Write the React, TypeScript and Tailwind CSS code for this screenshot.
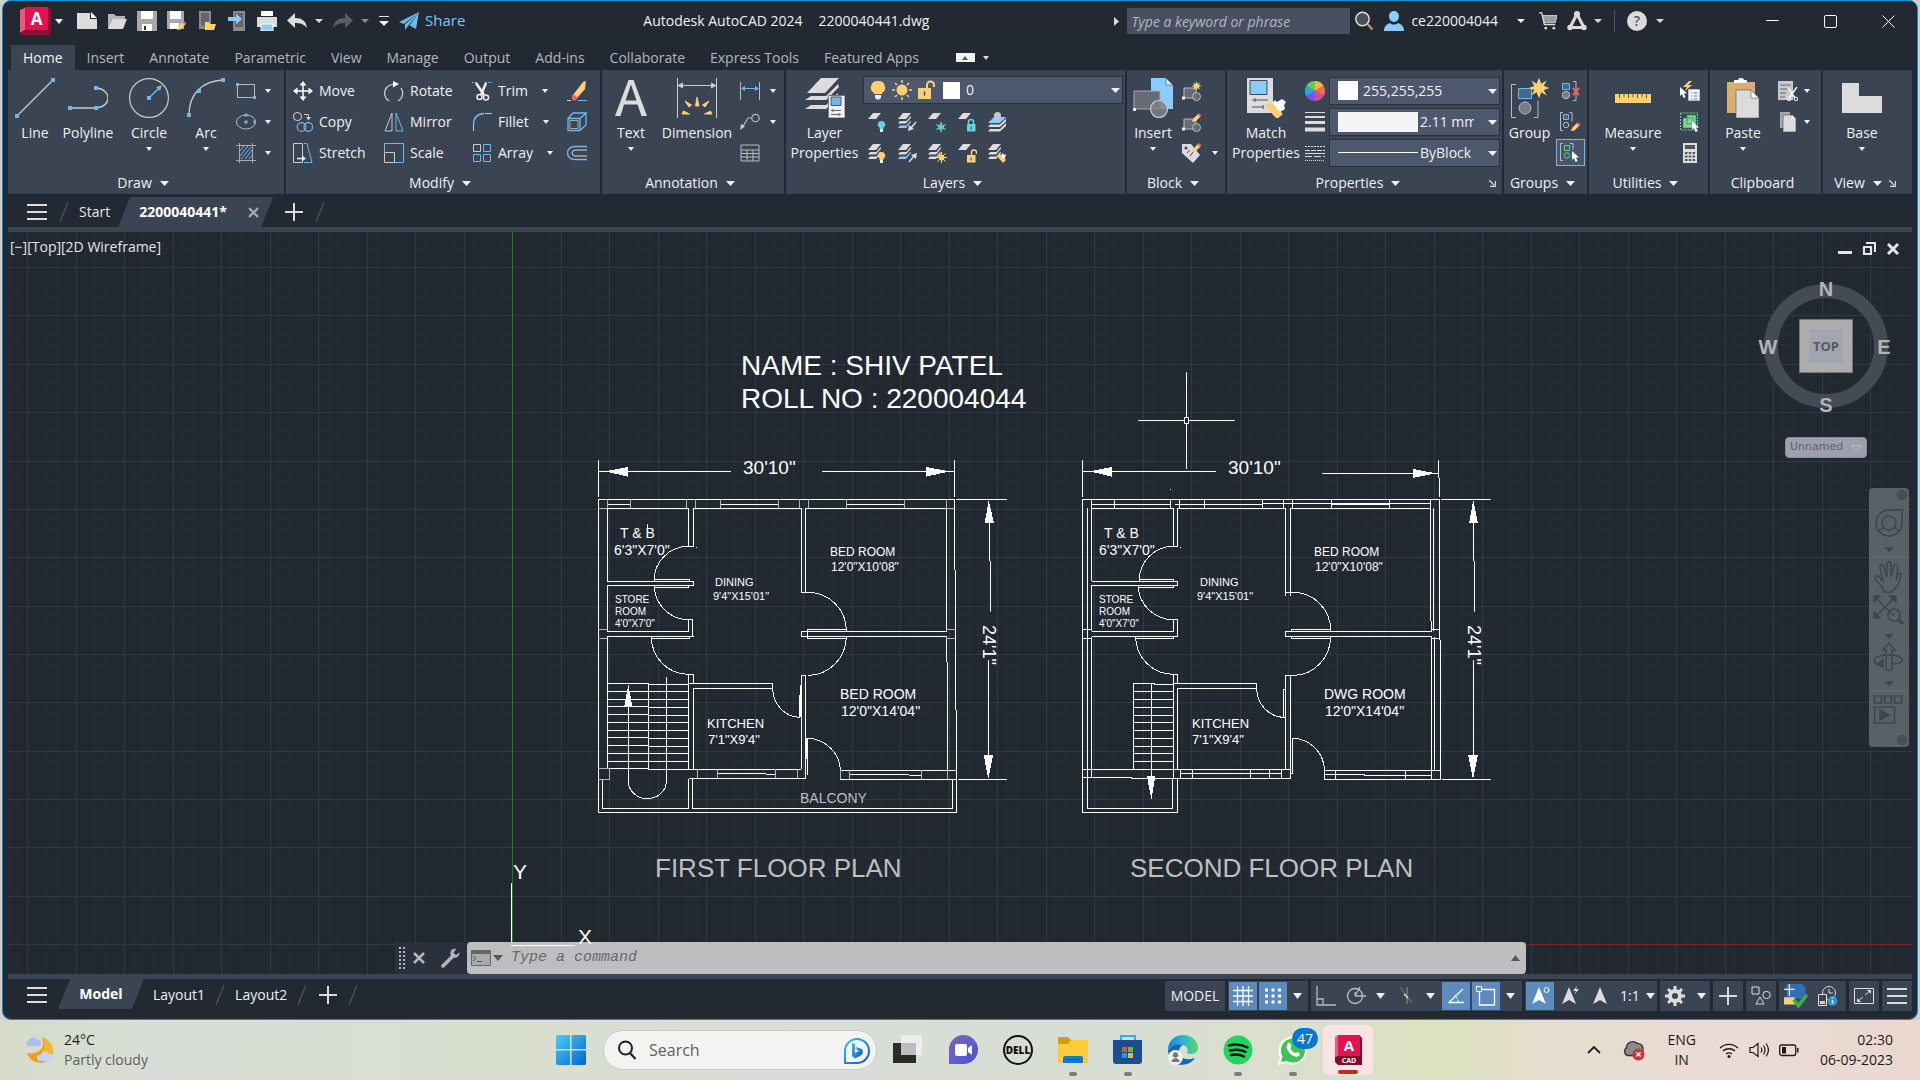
import React from "react";

const W = "#dcdcdc";
const B = "#6fb8ee";
const S = "#8accff";
const Y = "#ffcf74";

type Kids = { children?: React.ReactNode };

function Ico({ children, className = "h-5 w-5", box = 20 }: Kids & { className?: string; box?: number }) {
  return (
    <svg viewBox={`0 0 ${box} ${box}`} className={`shrink-0 ${className}`} fill="none" aria-hidden="true">
      {children}
    </svg>
  );
}

function Tri({ className = "h-1 w-2 text-[#dcdcdc]" }: { className?: string }) {
  return (
    <svg viewBox="0 0 8 5" preserveAspectRatio="none" className={`shrink-0 ${className}`} aria-hidden="true">
      <path d="M0 0h8L4 5z" fill="currentColor" />
    </svg>
  );
}

/* ---------- icons ---------- */

const Dot = ({ x, y, s = 4 }: { x: number; y: number; s?: number }) => (
  <rect x={x - s / 2} y={y - s / 2} width={s} height={s} fill={B} />
);

const Cursor = ({ x, y }: { x: number; y: number }) => (
  <path transform={`translate(${x} ${y})`} d="M0 0v9l2-2 1.600 4 2-1-1.700-3.500H7z" fill="#fff" />
);

const Star = ({ x, y, k = 1 }: { x: number; y: number; k?: number }) => (
  <path
    transform={`translate(${x} ${y}) scale(${k})`}
    d="M0-5.500 1.200-2.200 4-4 2.500-1.100 5.500 0 2.500 1.100 4 4 1.200 2.300 0 5.500-1.200 2.300-4 4-2.500 1.100-5.500 0-2.500-1.100-4-4-1.200-2.200z"
    fill={Y}
  />
);

const Pencil = ({ x, y }: { x: number; y: number }) => (
  <g transform={`translate(${x} ${y})`}>
    <path d="M0 8 1 5l5-5 2.500 2.500-5 5z" fill={Y} />
    <path d="M5.500.5 7-1l2.500 2.500L8 3z" fill="#f0625f" />
  </g>
);

const Stack = ({ blue = false, n = 3 }: { blue?: boolean; n?: number }) => (
  <g>
    <path d="M6 1h8l-5 6H1z" fill={W} />
    {n > 1 && <path d="M3 9h6.500l4-5 .5 1.500L9 11.500H1z" fill={W} />}
    {n > 2 && <path d="M3 13.500h6.500l4-5 .5 1.500L9 16H1z" fill={blue ? S : W} />}
  </g>
);

const Lock = ({ c, open = false }: { c: string; open?: boolean }) => (
  <g>
    <path d={open ? "M14.500 12V9.500a2.500 2.500 0 0 1 5 0V11" : "M11.500 12V10a2.500 2.500 0 0 1 5 0v2"} stroke={c} strokeWidth="1.500" />
    <path d="M10 12h8.500v7.500H10z" fill={c} />
    <path d="M14 14.500v3" stroke="#3b4453" />
  </g>
);

const Bulb = ({ c }: { c: string }) => (
  <g>
    <path d="M14.500 9a3.500 3.500 0 0 1 2 6.500v1.500h-4v-1.500A3.500 3.500 0 0 1 14.500 9z" fill={c} />
    <path d="M13 17h3v3h-3z" fill="#eee" />
  </g>
);

const BlockBase = () => (
  <g>
    <path d="M2 7h12v10H2z" fill="#666c77" stroke="#b9bcc2" />
    <circle cx="14.500" cy="15.500" r="4" fill="#666c77" fillOpacity=".8" stroke="#b9bcc2" />
    <path d="M0 15.500h3v3H0z" fill="#eee" />
  </g>
);

const I = {
  newFile: <Ico><path d="M0 2h13v6h7v10H0z" fill={W} /><path d="M14 1l6 6h-6z" fill="#fff" /></Ico>,
  open: <Ico><path d="M1 18V3h6l2 2h9v3H5z" fill="#b5b5b5" /><path d="M5 8h15l-4 10H1z" fill={W} /></Ico>,
  save: <Ico><path d="M0 0h20v20H0z" fill="#a9a9a9" /><path d="M4 0h12v8H4zM5 13h10v7H5z" fill="#fff" /><path d="M7 15h2v4H7z" fill="#333" /></Ico>,
  saveAs: <Ico><path d="M0 0h17v18H0z" fill="#a9a9a9" /><path d="M3 0h11v8H3zM3 12h9v6H3z" fill="#fff" /><Pencil x={10} y={11} /></Ico>,
  mobileOpen: <Ico><path d="M2 0h12v18H2z" fill="#8b8b8b" /><path d="M4 2h8v13H4z" fill="#666" /><path d="M8 19V11h4l1 2h6l-2 6z" fill={Y} /></Ico>,
  mobileSave: <Ico><path d="M6 0h12v20H6z" fill="#8b8b8b" /><path d="M8 2h8v14H8z" fill="#666" /><path d="M1 6h8V2.500L15 8l-6 5.500V10H1z" fill={S} /></Ico>,
  print: <Ico><path d="M4 0h12v5H4z" fill="#fff" /><path d="M0 6h20v10H0z" fill={W} /><path d="M4 13h12v7H4z" fill={S} stroke="#fff" /></Ico>,
  undo: <Ico><path d="M8 2v5c7 0 11 3 12 10-3-4-7-5-12-5v5L0 9.500z" fill={W} /></Ico>,
  redo: <Ico><path d="M12 2v5C5 7 1 10 0 17c3-4 7-5 12-5v5l8-7.500z" fill="#5a5f67" /></Ico>,
  plane: <Ico><path d="M20 1 0 11l5 2zM20 1 6 13.500V19l3-4zM20 1l-3 17-6.500-3.500z" fill={B} /></Ico>,
  line: <Ico box={40} className="h-10 w-10"><path d="M2 38 38 2" stroke="#ccc" strokeWidth="1.300" /><Dot x={2} y={38} /><Dot x={38} y={2} /></Ico>,
  polyline: <Ico box={40} className="h-10 w-10"><path d="M2 30h26M28 10c16 1 16 19 0 20" stroke="#ccc" strokeWidth="1.300" /><Dot x={2} y={30} /><Dot x={28} y={30} /><Dot x={28} y={10} /></Ico>,
  circle: <Ico box={40} className="h-10 w-10"><circle cx="20" cy="20" r="19.400" stroke="#ccc" strokeWidth="1.200" /><path d="m20 20 10-10" stroke={B} strokeWidth="1.500" /><path d="m33 7-2 6-4-4z" fill={B} /><Dot x={20} y={20} /></Ico>,
  arc: <Ico box={40} className="h-10 w-10"><path d="M3 37C3 16 16 3 37 2" stroke="#ccc" strokeWidth="1.300" /><Dot x={3} y={37} /><Dot x={13} y={13} /><Dot x={37} y={2} /></Ico>,
  rect: <Ico><path d="M1.500 3.500h17v13h-17z" stroke="#bbb" /><Dot x={1.500} y={3.500} s={3} /><Dot x={18.500} y={16.500} s={3} /></Ico>,
  ellipse: <Ico><ellipse cx="10" cy="10" rx="9.500" ry="7" stroke="#bbb" /><Dot x={10} y={10} s={3} /><Dot x={10} y={3} s={3} /><Dot x={19} y={10} s={3} /></Ico>,
  hatch: <Ico><path d="M3.500 0v20M16.500 0v20M0 2.500h20M0 17.500h20" stroke="#aaa" /><path d="m4 8 4-5M4 13l8-10M5 16 15 4M9 16l7-9M13 16l3-4" stroke={B} /></Ico>,
  move: <Ico><path d="M10 2v16M2 10h16" stroke="#fff" strokeWidth="1.500" /><path d="m10 0 3.500 4.500h-7zM10 20l3.500-4.500h-7zM0 10l4.500-3.500v7zM20 10l-4.500-3.500v7z" fill="#fff" /></Ico>,
  rotate: <Ico><path d="M5 3.500A9 9 0 1 0 17 6" stroke="#ccc" strokeWidth="1.300" transform="translate(0 1)" /><path d="M5 4.500 10 3" stroke="#ccc" strokeWidth="1.300" /><path d="M9 0l6 3-6 3.500z" fill="#fff" /></Ico>,
  trim: <Ico><path d="M0 1.500h6M13 1.500h7" stroke={B} strokeDasharray="2 1" /><path d="m4 2 8 12M14 2 9 14" stroke="#eee" strokeWidth="2.500" /><circle cx="7.500" cy="16" r="2.500" stroke="#eee" strokeWidth="1.500" /><circle cx="14" cy="16.500" r="2.500" stroke="#eee" strokeWidth="1.500" /></Ico>,
  erase: <Ico><path d="m19 0-1 8-8 9-4-3L16 1z" fill={Y} /><path d="m6 13 5 4-2.500 2.500C5 20 3.500 17 6 13z" fill="#f0625f" /><path d="M0 19.500h4" stroke="#ccc" /><path d="M11 19.500h9" stroke={B} /></Ico>,
  copy: <Ico><circle cx="4.500" cy="4.500" r="4" stroke="#bbb" strokeWidth="1.200" /><circle cx="8.500" cy="15" r="4.300" stroke={B} strokeWidth="1.200" /><circle cx="15.300" cy="15" r="4.300" stroke={B} strokeWidth="1.200" /><path d="M11 2.500h4.500V6" stroke="#ccc" /><path d="M13 5h5l-2.500 3.500z" fill="#ccc" /></Ico>,
  mirror: <Ico><path d="M8 1v18H1z" stroke="#ccc" /><path d="M12 1v18h7z" stroke={B} /></Ico>,
  fillet: <Ico><path d="M1.500 19v-6" stroke="#ccc" /><path d="M1.500 13C1.500 6 5 2 12 1.500" stroke={B} strokeWidth="1.500" /><path d="M13 1.500h7" stroke="#ccc" /></Ico>,
  explode: <Ico><path d="M1 6.500h12v12H1zM1 6.500 6 1h13l-6 5.500M19 1v12l-6 5.500" stroke={B} strokeWidth="1.300" /><path d="M3 8.500h8v8H3z" stroke="#aaa" /></Ico>,
  stretch: <Ico><path d="M.5.500h9v19h-9z" stroke="#ccc" /><path d="M11 .5h3l5 19H11" stroke={B} /><path d="M4 15.500h6" stroke="#eee" strokeWidth="1.500" /><path d="m9 12.500 4 3-4 3z" fill="#eee" /></Ico>,
  scale: <Ico><path d="M.5 9V.500h19v19H9" stroke={B} /><path d="M.5 9.500h10v10H.500z" stroke="#ccc" /></Ico>,
  array: <Ico><path d="M1.500 1.500h7v7h-7z" stroke="#ccc" /><path d="M11.500 1.500h7v7h-7zM1.500 11.500h7v7h-7zM11.500 11.500h7v7h-7z" stroke={B} /></Ico>,
  offset: <Ico><path d="M20 3.500H8c-10 0-10 13 0 13h12" stroke={B} strokeWidth="1.300" /><path d="M20 7H9c-5 0-5 6 0 6h11" stroke="#aaa" strokeWidth="1.300" /></Ico>,
  text: <Ico box={40} className="h-10 w-10"><path d="M4 38 17.500 2h5L36 38h-5.500l-4-11.500H13L9.500 38zM14.500 22.500h11L20 6.500z" fill={W} /></Ico>,
  dimension: <Ico box={40} className="h-10 w-10"><path d="M.5 0v40M39.500 0v40M2 7.500h36" stroke="#ccc" /><path d="m0 7.500 6-3v6zM40 7.500l-6-3v6z" fill="#ccc" /><path d="M18.500 28 20 19l2 9zM12 29l-4-6 6.500 4zM28 29l4-6-6.500 4zM5 36l1.500-3 6 3zM35 36l-1.500-3-6 3z" fill={Y} stroke={Y} /></Ico>,
  linear: <Ico><path d="M.5 1v18M19.500 1v18" stroke="#bbb" /><path d="M2 7.500h16" stroke={B} /><path d="m1 7.500 4-2.500v5zM19 7.500 15 5v5z" fill={B} /></Ico>,
  leader: <Ico><circle cx="15.500" cy="6" r="3.700" stroke="#bbb" strokeWidth="1.200" /><path d="M12 6H8L2 16" stroke="#bbb" strokeWidth="1.200" /><path d="m0 18 1-6 4 2.500z" fill="#ccc" /></Ico>,
  table: <Ico><path d="M1 2h18v16H1zM1 7h18M1 10.500h18M1 14h18M7 7v11M13 7v11" stroke="#bbb" /></Ico>,
  layerProps: <Ico box={40} className="h-10 w-10"><path d="M16 0h18L20 15H2z" fill={W} /><path d="M6 18h15L33 6l1 3-13 13H0zM6 27h15L33 15v4L21 31H0z" fill={W} /><path d="M23.500 17.500H40V40H23.500z" fill="#f2f2f2" stroke="#777" /><path d="M26 19h10v8.500H26z" fill={B} stroke="#556" /><path d="M26 32.500h10M26 36.500h10M28 31v3M34 35v3" stroke="#666" /></Ico>,
  bulbBig: <Ico><path d="M10 1a6.500 6.500 0 0 1 4 12v1H6v-1a6.500 6.500 0 0 1 4-12z" fill={Y} /><path d="M7 15h6v3l-2 1.500H9L7 18z" fill="#eee" /></Ico>,
  sunBig: <Ico><circle cx="10" cy="10" r="5.500" fill={Y} /><path d="M10 0v3M10 17v3M0 10h3M17 10h3M3 3l2 2M15 15l2 2M3 17l2-2M15 5l2-2" stroke={Y} strokeWidth="1.500" /></Ico>,
  lockBig: <Ico><path d="M2 8h13v11H2z" fill={Y} /><path d="M11 8V5a3.500 3.500 0 0 1 7 0v2" stroke={Y} strokeWidth="2" /><path d="M8.500 11.500v4" stroke="#3b4453" strokeWidth="1.500" /></Ico>,
  lOff: <Ico><Stack n={1} /><Bulb c="#66d3dc" /></Ico>,
  lIso: <Ico><Stack blue /><path d="m19 10-5 6" stroke="#ddd" strokeWidth="1.500" /><path d="m11 19 1-6 5 4z" fill="#ddd" /></Ico>,
  lFreeze: <Ico><Stack n={1} /><path d="M14 10v10M9.500 12.500l9 5M18.500 12.500l-9 5" stroke="#66d3dc" strokeWidth="1.300" /><circle cx="14" cy="15" r="2.500" stroke="#66d3dc" /></Ico>,
  lLock: <Ico><Stack n={1} /><Lock c="#66d3dc" /></Ico>,
  lCurrent: <Ico><path d="M7 5h12l-6 6H1z" fill={S} /><path d="M3 12.500h10l6-6v3l-6 5.500H1zM3 17h10l6-6v3L13 19.500H1z" fill={W} /><circle cx="10.500" cy="3.500" r="3.500" fill="#c6c6c6" /></Ico>,
  lOn: <Ico><Stack /><Bulb c={Y} /></Ico>,
  lUniso: <Ico><Stack blue /><path d="m12 19 5-6" stroke="#ddd" strokeWidth="1.500" /><path d="m20 10-1 6-5-4z" fill="#ddd" /></Ico>,
  lThaw: <Ico><Stack /><circle cx="14.500" cy="14.500" r="3" fill={Y} /><path d="M14.500 9v11M9 14.500h11M10.500 10.500l8 8M18.500 10.500l-8 8" stroke={Y} /></Ico>,
  lUnlock: <Ico><Stack n={1} /><Lock c={Y} open /></Ico>,
  lMatch: <Ico><Stack /><path d="m10 13 3-2 6 6-3 3z" fill={Y} /><path d="m14 12 2-2 1 2 2-1-1 4-2 1z" fill="#fff" /></Ico>,
  insert: <Ico box={40} className="h-10 w-10"><path d="M18 0h15l7 7v24H18z" fill={S} /><path d="M33 0l7 7h-7z" fill="#d8eeff" stroke="#3b4453" strokeWidth=".6" /><path d="M1 13h26v18H1z" fill="#666c77" stroke="#aaa" /><circle cx="26" cy="31" r="8.500" fill="#7b818b" fillOpacity=".85" stroke="#ccc" strokeWidth="1.200" /><path d="M0 30h3v3H0z" fill="#eee" /></Ico>,
  blockNew: <Ico><BlockBase /><Star x={14.500} y={5} k={0.900} /></Ico>,
  blockEdit: <Ico><BlockBase /><Pencil x={10} y={2} /></Ico>,
  tag: <Ico><path d="M0 1h9l9 11-7 8L0 10z" fill={W} /><circle cx="4" cy="5" r="1.500" fill="#3b4453" /><path d="m5 10 3-3M8 13l4-5" stroke="#3b4453" /><Pencil x={10} y={1} /></Ico>,
  match: <Ico box={40} className="h-10 w-10"><path d="M1 0h26v35H1z" fill={W} /><path d="M4 2.500h17v14H4z" fill={S} stroke="#445" /><path d="M6 22h16M6 29h12M9 20v4M17 27v4" stroke="#555" /><path d="m19 28 6-4 12 12-6 5z" fill={Y} /><path d="m26 25 3-3 2 2 5-3 4 3-2 3 1 4-5 3z" fill="#fff" /></Ico>,
  wheel: <Ico><g><path d="M10 10V0a10 10 0 0 1 8.700 5z" fill="#ffb13d" /><path d="m10 10 8.700-5a10 10 0 0 1 0 10z" fill="#f06a5b" /><path d="m10 10 8.700 5A10 10 0 0 1 10 20z" fill="#d94c8d" /><path d="M10 10v10a10 10 0 0 1-8.700-5z" fill="#7c53f0" /><path d="m10 10-8.700 5a10 10 0 0 1 0-10z" fill="#29a8e0" /><path d="M10 10 1.300 5A10 10 0 0 1 10 0z" fill="#67c95c" /></g></Ico>,
  weights: <Ico><path d="M0 .5h20" stroke={W} /><path d="M0 5h20" stroke={W} strokeWidth="2" /><path d="M0 10.500h20" stroke={W} strokeWidth="3" /><path d="M0 17.500h20" stroke={W} strokeWidth="4" /></Ico>,
  types: <Ico><path d="M0 3.500h20" stroke={W} strokeDasharray="2 1" /><path d="M0 7.500h20" stroke={W} strokeDasharray="5 1" /><path d="M0 10.500h20" stroke={W} /><path d="M0 13.500h20" stroke={W} strokeDasharray="7 2" /><path d="M0 17.500h20" stroke={W} strokeDasharray="1 1" /></Ico>,
  group: <Ico box={40} className="h-10 w-10"><path d="M6 6.500H1.500v33H6M24 39.500h4v-17" stroke="#bbb" /><path d="M8.500 10.500h13v10h-13z" fill="#44688a" stroke={B} /><circle cx="15" cy="30" r="6" fill="#777d88" stroke="#bbb" /><Star x={29} y={10} k={1.900} /></Ico>,
  ungroup: <Ico><path d="M13 .5h3v19h-3" stroke="#bbb" /><path d="M2.500 2.500h7v6h-7z" fill="#44688a" stroke={B} /><circle cx="6" cy="14" r="3.700" fill="#777d88" stroke="#bbb" /><path d="m13 7 6 7M19 7l-6 7" stroke="#f0625f" strokeWidth="2" /></Ico>,
  groupEdit: <Ico><path d="M3 .5H.5v18H3M9.500.500H12v9" stroke="#bbb" /><path d="M3.500 2.500h5v5h-5z" fill="#44688a" stroke={B} /><circle cx="6" cy="13" r="2.700" stroke="#bbb" /><Pencil x={11} y={11} /></Ico>,
  groupSel: <Ico><path d="M3 .5H.5v17H3M10 .5h3v6" stroke="#bbb" /><path d="M4.500 2.500h5v5h-5z" stroke="#5fd28c" /><circle cx="7" cy="12.500" r="2.700" stroke="#5fd28c" /><Cursor x={12} y={8} /></Ico>,
  ruler: <Ico box={40} className="h-10 w-10"><path d="M2 16h36v9H2z" fill={Y} /><path d="M6.500 16v4M11 16v3M15.500 16v4M20 16v3M24.500 16v4M29 16v3M33.500 16v4" stroke="#6b5a36" /></Ico>,
  quick: <Ico><path d="M9 0 3 6h4L5 10l7-6H8l4-4z" fill={Y} /><path d="M8.500 8.500h11v11h-11z" fill="#f5f5f5" stroke="#bbb" /><path d="M11 12h1M11 15h1M11 18h1M13.500 12h4M13.500 15h4M13.500 18h4" stroke="#3b8de0" /><Cursor x={0} y={6} /></Ico>,
  selAll: <Ico><path d="M.5 1h17v17H.5z" stroke="#5fd28c" strokeDasharray="2 1" /><path d="M3 6h10v10H3zM7 3h9v9H7z" fill="#7cd79b" stroke="#3f7d5b" strokeWidth=".7" /><Cursor x={12} y={9} /></Ico>,
  calc: <Ico><path d="M3 0h14v20H3z" fill={W} /><path d="M5 2h10v4H5z" fill="#555" /><path d="M5 9h2.500v2H5zM8.700 9h2.500v2H8.700zM12.500 9H15v2h-2.500zM5 12.500h2.500v2H5zM8.700 12.500h2.500v2H8.700zM12.500 12.500H15v2h-2.500zM5 16h2.500v2H5zM8.700 16h2.500v2H8.700zM12.500 16H15v2h-2.500z" fill="#555" /></Ico>,
  paste: <Ico box={40} className="h-10 w-10"><path d="M4 4h28v31H4z" fill="#d9ad73" /><path d="M11 5V2h4c1-3 5-3 6 0h3v3z" fill="#fff" /><path d="M13 12h15l8 8v20H13z" fill={W} stroke="#555" strokeWidth=".6" /><path d="M28 12l8 8h-8z" fill="#fff" stroke="#555" strokeWidth=".6" /></Ico>,
  cut: <Ico><path d="M0 0h15v19H0z" fill="#c9c9c9" /><path d="M2 4h11M2 8h8M2 12h6M2 16h5" stroke="#666" /><path d="m10 7 7 10M19 6l-8 11" stroke="#fff" strokeWidth="1.500" /><circle cx="11" cy="18" r="1.800" stroke="#fff" /><circle cx="18" cy="18" r="1.800" stroke="#fff" /></Ico>,
  copyClip: <Ico><path d="M2 0h10v16H2z" fill="#a9a9a9" /><path d="M5 3h9l4 4v13H5z" fill={W} stroke="#3b4453" strokeWidth=".6" /><path d="M14 3l4 4h-4z" fill="#fff" /></Ico>,
  base: <Ico box={40} className="h-10 w-10"><path d="M0 5h17v13h23v17H0z" fill={W} /></Ico>,
};

/* ---------- title bar ---------- */

function IconButton({ label, children, className = "" }: Kids & { label: string; className?: string }) {
  return (
    <button type="button" aria-label={label} className={`flex shrink-0 items-center justify-center ${className}`}>
      {children}
    </button>
  );
}

function TitleBar() {
  return (
    <header className="flex h-11 items-center pb-1 text-sm text-[#f0f0f0]">
      <IconButton label="Application menu" className="ml-[17px] gap-1">
        <svg viewBox="0 0 31 28" className="h-7 w-[31px]">
          <path d="M0 3 5 1v22l-5 3z" fill="#f0587f" />
          <path d="M5 0h23v23H5z" fill="#e3114f" />
          <path d="M28 0l3 2v25l-3-4zM0 26l5-3h23l3 5H2z" fill="#8d1030" />
          <text x="16.500" y="18" textAnchor="middle" fontFamily="Open Sans, sans-serif" fontWeight="700" fontSize="17" fill="#fff">A</text>
        </svg>
        <Tri className="h-[5px] w-2" />
      </IconButton>
      <div className="ml-[14px] flex items-center gap-[10px]">
        <IconButton label="New">{I.newFile}</IconButton>
        <IconButton label="Open">{I.open}</IconButton>
        <IconButton label="Save">{I.save}</IconButton>
        <IconButton label="Save as">{I.saveAs}</IconButton>
        <IconButton label="Open from mobile">{I.mobileOpen}</IconButton>
        <IconButton label="Save to mobile">{I.mobileSave}</IconButton>
        <IconButton label="Plot">{I.print}</IconButton>
        <IconButton label="Undo" className="gap-2">{I.undo}<Tri /></IconButton>
        <IconButton label="Redo" className="gap-2">{I.redo}<Tri className="h-1 w-2 text-[#8a8e94]" /></IconButton>
        <IconButton label="Customize toolbar" className="flex-col gap-1">
          <span className="h-px w-[10px] bg-[#dcdcdc]" />
          <Tri className="h-[5px] w-[10px]" />
        </IconButton>
        <button type="button" className="flex items-center gap-[6px] text-[15px] text-[#7cc4f8]">{I.plane}Share</button>
      </div>
      <h1 className="ml-[178px] flex gap-4 whitespace-nowrap"><span>Autodesk AutoCAD 2024</span><span>2200040441.dwg</span></h1>
      <div className="ml-auto flex items-center">
        <svg viewBox="0 0 5 9" className="mr-2 h-[9px] w-[5px]"><path d="M0 0l5 4.500L0 9z" fill={W} /></svg>
        <input aria-label="Search help" placeholder="Type a keyword or phrase" className="h-[26px] w-[223px] bg-[#484f61] px-1 text-sm italic placeholder:text-[#b5b8bf]" />
        <IconButton label="Search" className="ml-1">
          <Ico><circle cx="8.500" cy="8" r="6.700" fill="#4a5058" stroke="#ddd" strokeWidth="1.500" /><path d="m13.500 13 5 5.500" stroke="#c49a6c" strokeWidth="2" /></Ico>
        </IconButton>
        <button type="button" className="ml-[10px] flex items-center gap-[7px]">
          <Ico><path d="M5 5a5 5 0 1 1 10 0c0 3-2 6-5 6S5 8 5 5zM0 20c0-5 3-7 6-8 2 2 6 2 8 0 3 1 6 3 6 8z" fill={S} /></Ico>
          ce220004044
          <Tri className="ml-3 h-1 w-2" />
        </button>
        <IconButton label="Store" className="ml-[14px]">
          <Ico className="h-[18px] w-[18px]"><path d="M0 1h3l3 13h12" stroke={W} strokeWidth="1.500" /><path d="M4 4h16l-2 8H6z" fill="#9a9a9a" stroke={W} /><circle cx="7.500" cy="18" r="1.500" fill={W} /><circle cx="16.500" cy="18" r="1.500" fill={W} /></Ico>
        </IconButton>
        <IconButton label="Autodesk apps" className="ml-[10px] gap-[7px]">
          <Ico><path d="M10 3 3 16.500h14z" stroke={W} strokeWidth="3" /><circle cx="10" cy="3" r="3" fill={W} /><circle cx="3" cy="16.500" r="2.700" fill={W} /><circle cx="17" cy="16.500" r="2.700" fill={W} /></Ico>
          <Tri />
        </IconButton>
        <span className="mx-3 h-[22px] w-px bg-[#4a5365]" />
        <IconButton label="Help" className="gap-[9px]">
          <span className="flex h-5 w-5 items-center justify-center rounded-full bg-[#dcdcdc] text-sm font-semibold text-[#555]">?</span>
          <Tri />
        </IconButton>
        <IconButton label="Minimize" className="ml-[102px]"><Ico className="h-[13px] w-[13px]" box={13}><path d="M0 5.500h13" stroke="#fff" /></Ico></IconButton>
        <IconButton label="Maximize" className="ml-[45px]"><Ico className="h-[13px] w-[13px]" box={13}><rect x=".5" y=".5" width="12" height="12" rx="1.500" stroke="#fff" /></Ico></IconButton>
        <IconButton label="Close" className="mr-[22px] ml-[45px]"><Ico className="h-[13px] w-[13px]" box={13}><path d="m.5.5 12 12M12.500.500l-12 12" stroke="#fff" /></Ico></IconButton>
      </div>
    </header>
  );
}

const TABS = ["Insert", "Annotate", "Parametric", "View", "Manage", "Output", "Add-ins", "Collaborate", "Express Tools", "Featured Apps"];

function RibbonTabs() {
  return (
    <nav className="ml-2 flex h-[25px] items-center text-sm text-[#b4b7bc]">
      <button type="button" className="h-full bg-[#3b4453] px-3 text-[#f2f2f2]">Home</button>
      {TABS.map((t) => (
        <button type="button" key={t} className="pr-[13px] pl-3">{t}</button>
      ))}
      <IconButton label="Minimize ribbon" className="ml-6 gap-1">
        <span className="flex h-[9px] w-[19px] items-center justify-center bg-[#f2f2f2]"><Tri className="h-1 w-[6px] rotate-180 text-[#555]" /></span>
        <Tri className="ml-1 h-1 w-[6px] text-[#dcdcdc]" />
      </IconButton>
    </nav>
  );
}

/* ---------- ribbon ---------- */

function Panel({ title, children, arrow = true, launcher = false, last = false }: Kids & { title: string; arrow?: boolean; launcher?: boolean; last?: boolean }) {
  return (
    <section className={`flex min-w-0 flex-col overflow-hidden ${last ? "" : "border-r-2 border-[#222933]"}`}>
      <div className="flex h-[102px] items-start">{children}</div>
      <div className={`flex h-[22px] items-center ${last ? "pr-4 pl-1" : "pr-[6px]"}`}>
        <button type="button" className="flex flex-1 items-center justify-center gap-2">
          {title}
          {arrow && <Tri className="h-[5px] w-[9px]" />}
        </button>
        {launcher && (
          <IconButton label={`${title} settings`}>
            <Ico className="h-[7px] w-[7px]" box={7}><path d="m0 0 5 5M6.500 1v5.500H1" stroke={W} strokeWidth="1.300" /></Ico>
          </IconButton>
        )}
      </div>
    </section>
  );
}

function Big({ icon, label, arrow, className }: { icon: React.ReactNode; label: string[]; arrow?: boolean; className: string }) {
  return (
    <button type="button" className={`flex shrink-0 flex-col items-center pt-2 ${className}`}>
      {icon}
      <span className="mt-[5px] block leading-5 whitespace-nowrap">
        {label.map((l) => <span key={l} className="block text-center">{l}</span>)}
      </span>
      {arrow && <Tri className="mt-1 h-1 w-[6px]" />}
    </button>
  );
}

function Col({ children, className = "" }: Kids & { className?: string }) {
  return <div className={`grid shrink-0 auto-rows-[31px] items-center pt-[5px] ${className}`}>{children}</div>;
}

function Small({ icon, label, arrow, gap = "gap-2" }: { icon: React.ReactNode; label: string; arrow?: boolean; gap?: string }) {
  return (
    <button type="button" aria-label={label} className={`flex items-center ${gap}`}>
      {icon}
      {arrow && <Tri className="ml-1 h-1 w-[6px]" />}
    </button>
  );
}

function Tool({ icon, label, arrow, gap = "gap-[6px]" }: { icon: React.ReactNode; label: string; arrow?: boolean; gap?: string }) {
  return (
    <button type="button" className={`flex items-center ${gap}`}>
      {icon}
      {label}
      {arrow && <Tri className="ml-2 h-1 w-[6px]" />}
    </button>
  );
}

function Combo({ label, value, pad, children }: Kids & { label: string; value: string; pad: string }) {
  return (
    <div className="relative flex h-7 w-full items-center border border-[#2a313c] bg-[#4d586c]">
      <select aria-label={label} className={`h-full w-full appearance-none bg-transparent outline-none ${pad}`}>
        <option>{value}</option>
      </select>
      <div className="pointer-events-none absolute inset-y-0 left-0 flex items-center">{children}</div>
      <Tri className="pointer-events-none absolute top-[11px] right-[2px] h-[5px] w-[9px]" />
    </div>
  );
}

function Ribbon() {
  return (
    <div className="mx-[5px] grid h-[124px] grid-cols-[278fr_316fr_184fr_341fr_100fr_277fr_85fr_121fr_113fr_89fr] bg-[#3b4453] text-sm text-[#f0f0f0]">
      <Panel title="Draw">
        <Big className="w-[54px]" icon={I.line} label={["Line"]} />
        <Big className="w-[52px]" icon={I.polyline} label={["Polyline"]} />
        <Big className="ml-2 w-[54px]" icon={I.circle} label={["Circle"]} arrow />
        <Big className="ml-[3px] w-[54px]" icon={I.arc} label={["Arc"]} arrow />
        <Col className="ml-[3px]">
          <Small icon={I.rect} label="Rectangle" arrow gap="gap-[5px]" />
          <Small icon={I.ellipse} label="Ellipse" arrow gap="gap-[5px]" />
          <Small icon={I.hatch} label="Hatch" arrow gap="gap-[5px]" />
        </Col>
      </Panel>
      <Panel title="Modify">
        <Col className="ml-[7px] w-[91px]">
          <Tool icon={I.move} label="Move" /><Tool icon={I.copy} label="Copy" /><Tool icon={I.stretch} label="Stretch" />
        </Col>
        <Col className="w-[88px]">
          <Tool icon={I.rotate} label="Rotate" /><Tool icon={I.mirror} label="Mirror" /><Tool icon={I.scale} label="Scale" />
        </Col>
        <Col className="w-[95px]">
          <Tool icon={I.trim} label="Trim" arrow /><Tool icon={I.fillet} label="Fillet" arrow /><Tool icon={I.array} label="Array" arrow />
        </Col>
        <Col>
          <Small icon={I.erase} label="Erase" /><Small icon={I.explode} label="Explode" /><Small icon={I.offset} label="Offset" />
        </Col>
      </Panel>
      <Panel title="Annotation">
        <Big className="ml-[2px] w-[54px]" icon={I.text} label={["Text"]} arrow />
        <Big className="ml-1 w-[70px]" icon={I.dimension} label={["Dimension"]} />
        <Col className="ml-2">
          <Small icon={I.linear} label="Linear" arrow gap="gap-[6px]" />
          <Small icon={I.leader} label="Leader" arrow gap="gap-[6px]" />
          <Small icon={I.table} label="Table" />
        </Col>
      </Panel>
      <Panel title="Layers">
        <Big className="w-[77px]" icon={I.layerProps} label={["Layer", "Properties"]} />
        <div className="min-w-0 flex-1 pt-[6px] pr-[2px]">
          <Combo label="Layer" value="0" pad="pl-[102px]">
            <span className="flex items-center gap-1 pl-1">
              {I.bulbBig}{I.sunBig}{I.lockBig}<span className="ml-[3px] h-[17px] w-[17px] bg-white" />
            </span>
          </Combo>
          <div className="mt-[2px] grid grid-cols-[repeat(5,30px)] auto-rows-[31px] items-center pl-1">
            <Small icon={I.lOff} label="Layer off" /><Small icon={I.lIso} label="Isolate" /><Small icon={I.lFreeze} label="Freeze" />
            <Small icon={I.lLock} label="Lock" /><Small icon={I.lCurrent} label="Make current" />
            <Small icon={I.lOn} label="All layers on" /><Small icon={I.lUniso} label="Unisolate" /><Small icon={I.lThaw} label="Thaw all" />
            <Small icon={I.lUnlock} label="Unlock" /><Small icon={I.lMatch} label="Match layer" />
          </div>
        </div>
      </Panel>
      <Panel title="Block">
        <Big className="w-[52px]" icon={I.insert} label={["Insert"]} arrow />
        <Col className="ml-[3px]">
          <Small icon={I.blockNew} label="Create block" /><Small icon={I.blockEdit} label="Edit block" />
          <Small icon={I.tag} label="Edit attributes" arrow gap="gap-[6px]" />
        </Col>
      </Panel>
      <Panel title="Properties" launcher>
        <Big className="w-[78px]" icon={I.match} label={["Match", "Properties"]} />
        <Col className="w-6">{I.wheel}{I.weights}{I.types}</Col>
        <Col className="min-w-0 flex-1 pr-[2px]">
          <Combo label="Object color" value="255,255,255" pad="pl-[33px]"><span className="ml-2 h-[19px] w-5 bg-white" /></Combo>
          <Combo label="Lineweight" value="2.11 mm" pad="pl-[90px] mr-[25px] overflow-hidden"><span className="ml-2 h-5 w-20 bg-[#f5f5f5]" /></Combo>
          <Combo label="Linetype" value="ByBlock" pad="pl-[90px]"><span className="ml-2 h-px w-20 bg-white" /></Combo>
        </Col>
      </Panel>
      <Panel title="Groups">
        <Big className="w-[51px]" icon={I.group} label={["Group"]} />
        <Col className="w-[30px] justify-items-center">
          <Small icon={I.ungroup} label="Ungroup" /><Small icon={I.groupEdit} label="Group edit" />
          <button type="button" aria-label="Group selection" className="flex h-[27px] w-[29px] items-center justify-center border border-[#6fb8ee] bg-[#46566d]">{I.groupSel}</button>
        </Col>
      </Panel>
      <Panel title="Utilities">
        <Big className="w-[88px]" icon={I.ruler} label={["Measure"]} arrow />
        <Col className="ml-[3px]">
          <Small icon={I.quick} label="Quick select" /><Small icon={I.selAll} label="Select all" /><Small icon={I.calc} label="Calculator" />
        </Col>
      </Panel>
      <Panel title="Clipboard" arrow={false}>
        <Big className="ml-[6px] w-[54px]" icon={I.paste} label={["Paste"]} arrow />
        <Col className="ml-2">
          <Small icon={I.cut} label="Cut" arrow gap="gap-[2px]" /><Small icon={I.copyClip} label="Copy clip" arrow gap="gap-[2px]" />
        </Col>
      </Panel>
      <Panel title="View" launcher last>
        <Big className="w-[78px]" icon={I.base} label={["Base"]} arrow />
      </Panel>
    </div>
  );
}

/* ---------- tab strips ---------- */

function Hamburger({ label }: { label: string }) {
  return (
    <IconButton label={label}>
      <svg viewBox="0 0 20 16" className="h-4 w-5"><path d="M0 1h20M0 8h20M0 15h20" stroke={W} strokeWidth="2" /></svg>
    </IconButton>
  );
}

const Slash = () => (
  <svg viewBox="0 0 8 20" className="h-5 w-2 shrink-0"><path d="M8 0 0 20" stroke="#4a5261" strokeWidth="1.300" /></svg>
);

const Plus = () => <Ico className="h-[18px] w-[18px]" box={18}><path d="M9 0v18M0 9h18" stroke={W} strokeWidth="2" /></Ico>;

function FileTabs() {
  return (
    <nav className="flex h-[33px] items-center pt-[2px] pl-6 text-sm text-[#e6e6e6]">
      <Hamburger label="File tabs menu" />
      <span className="ml-[13px]"><Slash /></span>
      <button type="button" className="ml-[11px]">Start</button>
      <div className="mt-px ml-2 flex h-[30px] w-[155px] items-center justify-between bg-[#3b4453] pr-[14px] pl-[21px] font-bold text-white [clip-path:polygon(12px_0,100%_0,143px_100%,0_100%)]">
        2200040441*
        <IconButton label="Close tab"><Ico className="h-[11px] w-[11px]" box={10}><path d="m1 1 8 8M9 1 1 9" stroke="#a9adb4" strokeWidth="2" /></Ico></IconButton>
      </div>
      <IconButton label="New drawing" className="ml-3"><Plus /></IconButton>
      <span className="ml-[13px]"><Slash /></span>
    </nav>
  );
}

const SB = "flex h-[30px] items-center justify-center bg-[#3b4453]";
const ON = "flex h-7 w-7 items-center justify-center bg-[#5c8bc0]";

function StatusBar() {
  return (
    <footer className="flex h-10 text-sm text-[#f0f0f0]">
      <nav className="flex h-[31px] items-center pl-6">
        <Hamburger label="Layout menu" />
        <button type="button" className="mb-px ml-[11px] h-[30px] w-[86px] bg-[#3b4453] px-1 font-bold text-white [clip-path:polygon(12px_0,100%_0,74px_100%,0_100%)]">Model</button>
        <button type="button" className="ml-[9px]">Layout1</button>
        <span className="ml-[11px]"><Slash /></span>
        <button type="button" className="ml-[11px]">Layout2</button>
        <span className="ml-[11px]"><Slash /></span>
        <IconButton label="New layout" className="ml-[13px]"><Plus /></IconButton>
        <span className="ml-3"><Slash /></span>
      </nav>
      <div className="mt-[2px] mr-[5px] ml-auto flex gap-[3px]">
        <button type="button" className={`${SB} w-[60px]`}>MODEL</button>
        <div className={`${SB} w-[80px] justify-start gap-[2px] pl-px`}>
          <button type="button" aria-label="Grid" className={ON}><Ico><path d="M4.500 0v20M10 0v20M15.500 0v20M0 4.500h20M0 10h20M0 15.500h20" stroke="#fff" strokeWidth="1.300" /></Ico></button>
          <button type="button" aria-label="Snap" className={ON}><Ico><path d="M2 4h16M2 10h16M2 16h16" stroke="#fff" strokeWidth="3" strokeDasharray="3 3.500" /></Ico></button>
          <IconButton label="Snap options" className="ml-1"><Tri className="h-[6px] w-[9px]" /></IconButton>
        </div>
        <div className={`${SB} w-[211px] justify-start gap-[2px] pl-1`}>
          <IconButton label="Ortho" className="w-[22px]"><Ico><path d="M1 0v19h19M1 13h6v6" stroke="#bbb" strokeWidth="1.300" /></Ico></IconButton>
          <IconButton label="Polar tracking" className="ml-[7px] gap-[10px]"><Ico><circle cx="9" cy="10" r="7.500" stroke="#bbb" strokeWidth="1.300" /><path d="M9 10h11M9 10l5-9M9 6v4" stroke="#bbb" strokeWidth="1.300" /></Ico><Tri className="h-[6px] w-[9px]" /></IconButton>
          <IconButton label="Isometric drafting" className="ml-[9px] gap-[10px]"><Ico><path d="m4 1 12 16" stroke="#d05a5a" /><path d="M11 1v17" stroke="#5fb97a" /><path d="m8 8 4 4" stroke="#ddd" strokeWidth="1.500" /></Ico><Tri className="h-[6px] w-[9px]" /></IconButton>
          <button type="button" aria-label="Object snap tracking" className={`${ON} ml-[5px]`}><Ico><path d="M17 3 3 16.500h15" stroke="#fff" strokeWidth="1.300" /><path d="M8 9a8 8 0 0 1 4 7" stroke="#fff" strokeDasharray="2 1" /></Ico></button>
          <button type="button" aria-label="Object snap" className={ON}><Ico><path d="M4 3.500h14.500V19H3.500V5" stroke="#fff" strokeWidth="1.300" /><path d="M.5.500h5v5h-5z" fill="#5c8bc0" stroke="#fff" /></Ico></button>
          <IconButton label="Snap settings" className="ml-1"><Tri className="h-[6px] w-[9px]" /></IconButton>
        </div>
        <div className={`${SB} w-[132px] justify-start gap-[2px] pl-px`}>
          <button type="button" aria-label="Annotation visibility" className={ON}><Ico><path d="M9 1 2 18l7-4 7 4z" fill="#fff" /><circle cx="16.500" cy="4" r="2.500" stroke="#fff" /></Ico></button>
          <IconButton label="Auto scale" className="w-7"><Ico><path d="M9 1 2 18l7-4 7 4z" fill={W} /><path d="m17 0-4 5h3l-2 4 5-6h-3z" fill={W} /></Ico></IconButton>
          <IconButton label="Annotation scale" className="w-7"><Ico><path d="M10 1 3 18l7-4 7 4z" fill={W} /></Ico></IconButton>
          <button type="button" className="ml-1 flex items-center gap-[6px]">1:1<Tri className="h-[6px] w-[9px]" /></button>
        </div>
        <IconButton label="Workspace" className={`${SB} w-[50px] gap-3`}>
          <Ico><circle cx="10" cy="10" r="5" stroke={W} strokeWidth="4" /><path d="M10 0v4M10 16v4M0 10h4M16 10h4M3 3l3 3M14 14l3 3M3 17l3-3M14 6l3-3" stroke={W} strokeWidth="3" /></Ico>
          <Tri className="h-[6px] w-[9px]" />
        </IconButton>
        <IconButton label="Annotation monitor" className={`${SB} w-[30px]`}><Plus /></IconButton>
        <IconButton label="Isolate objects" className={`${SB} w-[30px]`}><Ico><path d="M1 1h7v7H1zM5 18l4-7 4 7z" stroke={W} /><circle cx="15.500" cy="9" r="3.700" stroke={W} /></Ico></IconButton>
        <div className={`${SB} w-[67px] gap-[10px] pr-1`}>
          <IconButton label="Standards check"><Ico className="h-6 w-6"><path d="M2 0h13l3 3v9H2z" fill="#2f6fb5" /><path d="M0 11h9v6H0z" fill={Y} /><path d="M4.500 0v10M0 4.500h9" stroke="#fff" /><path d="m8 13 4 5 7-9" stroke="#3fae49" strokeWidth="3" /></Ico></IconButton>
          <IconButton label="Activity insights"><Ico><circle cx="11" cy="7" r="6.500" stroke={W} /><path d="M11 3v4h4" stroke={W} /><path d="M.5 8.500h8v11h-8z" fill="#3b4453" stroke="#e6e6e6" /><path d="M2 15h5v3H2z" fill={Y} /><circle cx="14.500" cy="15" r="5" fill="#2e8fe0" /><path d="M14.500 14v4M14.500 11.500v1" stroke="#fff" strokeWidth="1.500" /></Ico></IconButton>
        </div>
        <IconButton label="Clean screen" className={`${SB} w-[30px]`}><Ico><path d="M.5 2.500h19v15H.500z" stroke={W} /><path d="m11 9 5-4M9 11l-5 4" stroke={W} /><path d="M13 4h4v4zM7 16H3v-4z" fill={W} /></Ico></IconButton>
        <div className={`${SB} w-[30px]`}><Hamburger label="Customization" /></div>
      </div>
    </footer>
  );
}

/* ---------- drawing canvas ---------- */

const GRID = Array.from({ length: 81 }, (_, i) => i);

function GridLines() {
  const ox = 512;
  const oy = 944;
  const minor: string[] = [];
  const major: string[] = [];
  for (let i = -52; i <= 340; i++) {
    const x = Math.round(ox + i * 9.7) + 0.5;
    (i % 5 === 0 ? major : minor).push(`M${x} 232V1400`);
  }
  for (const i of GRID) {
    const y = Math.round(oy - i * 9.67) + 0.5;
    (i % 5 === 0 ? major : minor).push(`M0 ${y}H4000`);
  }
  return (
    <g strokeWidth="1">
      <path d={minor.join("")} stroke="#262d38" />
      <path d={major.join("")} stroke="#31384a" />
      <path d="M512.500 232V944" stroke="#1f7a24" />
      <path d="M512 944.500H4000" stroke="#7c2529" />
    </g>
  );
}

const Stroke = ({ d, c = "#fff", w = 1 }: { d: string; c?: string; w?: number }) => (
  <path d={d} stroke={c} strokeWidth={w} fill="none" vectorEffect="non-scaling-stroke" />
);

const steps = (ys: number[], a: number, b: number) => ys.map((y) => `M${a} ${y}H${b}`).join("");
const ticks = (xs: number[], a: number, b: number) => xs.map((x) => `M${x} ${a}V${b}`).join("");
const LEFT = [730, 754, 778, 799, 823, 847, 871, 892, 916, 940, 964, 985];
const RIGHT = [733, 754, 778, 802, 826, 847, 871, 895, 919, 940, 964, 988];

function FirstFloor() {
  return (
    <svg x="580" y="440" width="440" height="400" viewBox="0 0 1320 1200" overflow="visible" shapeRendering="crispEdges">
      <Stroke d="M55 60V172M1123 60V172M55 94H453M726 94H1123M1129 178H1280M1134 1018H1280M1228 250V362M1231 362V516M1225 660V945" />
      <path d="M75 94 144 81V110zM1110 94 1038 81V110zM1226 180 1214 250H1242zM1225 1018 1211 945H1239zM145 733 133 799H157z" fill="#fff" />
      <Stroke d="M55 178H1123V390M1126 390V810M1129 810V1117H55V178M82 205H326M341 205H664M677 205H1099M82 205V424M82 436V574M82 590V985" />
      <Stroke d="M326 205V319H341V205M664 205V457M677 205V457M82 424H341V436H82M223 418H329V424M223 442H326V436" />
      <Stroke d="M326 319A103 100 0 0 0 223 424M223 436A103 103 0 0 0 326 539H338V590M326 539V574H82M82 590H341M214 595H329V590M214 590A112 113 0 0 0 326 703H341V733M326 703V988M349 322h2" />
      <Stroke d="M326 730H578M341 745H578V730M578 745A82 88 0 0 0 660 832M341 745V988M664 706V988M326 988H664M326 1015H677V706H664" />
      <path d="M657 830V780L662 730V830zM679 895H684V1000L680 1010z" fill="#fff" />
      <Stroke d="M1099 205V574H664V590H1099V665M1102 665V991M682 595V568H799M682 595H799M664 457H685A115 115 0 0 1 799 574M799 590A115 117 0 0 1 685 706" />
      <Stroke d="M682 895A100 100 0 0 1 781 991H1129M781 1018H1129M67 1018V1105H326V1018M338 1018V1105H1117V1018" />
      <Stroke d="M82 192H151M421 192H595M799 192H973M412 1000H500L586 1003M808 1003H914L1024 1006" />
      <Stroke d={steps(LEFT, 82, 205) + steps(RIGHT, 205, 326) + "M205 730V988M145 799V1024A57 52 0 0 0 259 1024V711M202 253V270"} />
      <Stroke c="#b5b5b5" d={ticks([82, 151, 319, 346, 421, 595, 658, 685, 799, 973, 1099], 178, 205) + ticks([353, 412, 586, 652], 988, 1015) + ticks([781, 808, 1024, 1102], 991, 1018) + "M55 205H82M1099 205H1123M55 568H82M55 595H82M1099 568H1126M1099 595H1126M55 985H89V1018H55"} />
    </svg>
  );
}

function SecondFloor() {
  return (
    <svg x="1060" y="440" width="460" height="400" viewBox="0 0 1380 1200" overflow="visible" shapeRendering="crispEdges">
      <Stroke d="M67 60V172M1135 60V115M1138 115V172M67 94H468M786 100H1135M1143 178H1292M1146 1018H1292M1240 250V362M1243 362V516M1240 660V945" />
      <path d="M88 94 156 81V110zM1128 100 1059 87V114zM1240 180 1227 250H1254zM1239 1018 1224 945H1254zM274 1080 261 1009H286z" fill="#fff" />
      <Stroke d="M67 178H1138V600M1141 600V1018H793M1141 991H793M67 178V1117H353V1018M82 205V1012M95 205V424M95 436V574M95 590V1012M95 205H340M353 205H676M691 205H1111" />
      <Stroke d="M340 205V319H353V205M676 205V469M691 205V469M95 424H353V436H95M238 418H340V424M235 442H340V436" />
      <Stroke d="M340 319A102 102 0 0 0 238 424M235 436A105 103 0 0 0 340 539H353V590M340 539V574H95M95 590H353M227 595H340V590M227 590A113 113 0 0 0 340 703H353V733M340 703V988M361 322h2M331 148h2" />
      <Stroke d="M340 730H590M353 745H590V730M590 745A84 88 0 0 0 672 832H676M670 832V748H676M353 745V988M676 706V988M67 988H691M340 1015H691V706H676M67 1012H213L215 1015H340" />
      <Stroke d="M1111 205V478L1114 574H676V590H1114V991M1120 205V574M1123 590V991M694 574V568H812V574M694 590V595H812V590M676 457H700A112 115 0 0 1 812 574M812 590A112 117 0 0 1 700 706H691" />
      <Stroke d="M691 1000H697V895A97 97 0 0 1 793 991V1018M82 1012V1105H338V1018" />
      <Stroke d="M95 192H331M346 192H606V189H1111M362 1000H664M793 1003H914V1006H1114M815 192H989" />
      <Stroke d={steps(RIGHT.slice(1), 220, 340) + "M220 988V730H283V733H340M274 730V1010"} />
      <Stroke d={ticks([95, 163, 331, 358, 433, 606, 670, 697, 815, 989, 1111], 178, 205) + ticks([95, 340, 362, 397, 571, 628, 664], 988, 1015) + ticks([826, 1036, 1114], 991, 1018) + "M67 568H95M67 595H95M1114 568H1138M1114 595H1138"} />
    </svg>
  );
}

type Label = [string, number, number, number, string?];

const LABELS: Label[] = [
  ["NAME : SHIV PATEL", 741, 375, 28],
  ["ROLL NO : 220004044", 741, 408, 28],
  ["30'10\"", 743, 474, 19],
  ["30'10\"", 1228, 474, 19],
  ["FIRST FLOOR PLAN", 655, 877, 26, "#bfbfbf"],
  ["SECOND FLOOR PLAN", 1130, 877, 26, "#bfbfbf"],
  ["T & B", 620, 538, 14],
  ["6'3\"X7'0\"", 614, 555, 14],
  ["STORE", 615, 603, 10],
  ["ROOM", 615, 615, 10],
  ["4'0\"X7'0\"", 615, 627, 10],
  ["DINING", 715, 586, 11],
  ["9'4\"X15'01\"", 713, 600, 11],
  ["BED ROOM", 830, 556, 12],
  ["12'0\"X10'08\"", 831, 571, 12],
  ["BED ROOM", 840, 699, 14],
  ["12'0\"X14'04\"", 841, 716, 14],
  ["KITCHEN", 707, 728, 13],
  ["7'1\"X9'4\"", 708, 744, 13],
  ["BALCONY", 800, 803, 14, "#bfbfbf"],
  ["T & B", 1104, 538, 14],
  ["6'3\"X7'0\"", 1099, 555, 14],
  ["STORE", 1099, 603, 10],
  ["ROOM", 1099, 615, 10],
  ["4'0\"X7'0\"", 1099, 627, 10],
  ["DINING", 1200, 586, 11],
  ["9'4\"X15'01\"", 1197, 600, 11],
  ["BED ROOM", 1314, 556, 12],
  ["12'0\"X10'08\"", 1315, 571, 12],
  ["DWG ROOM", 1324, 699, 14],
  ["12'0\"X14'04\"", 1325, 716, 14],
  ["KITCHEN", 1192, 728, 13],
  ["7'1\"X9'4\"", 1192, 744, 13],
];

function ViewCube() {
  return (
    <div className="absolute top-[42px] right-[17px] w-[138px]">
      <svg viewBox="1757 274 138 150" className="h-[150px] w-[138px]" fontFamily="Liberation Sans, Arial, sans-serif" fontWeight="700" textAnchor="middle">
        <circle cx="1826" cy="346" r="55" fill="none" stroke="#444b54" strokeWidth="14" />
        <path d="M1799.500 319.500h53v53h-53z" fill="#adadad" stroke="#77787a" />
        <path d="M1809 329h34v34h-34z" fill="#a2a4ae" />
        <text x="1826" y="351" fontSize="13" fontFamily="Open Sans, sans-serif" fill="#555b66">TOP</text>
        <g fontSize="20" fill="#b4b4b4"><text x="1826" y="296">N</text><text x="1768" y="354">W</text><text x="1884" y="354">E</text><text x="1826" y="412">S</text></g>
      </svg>
      <button type="button" className="mt-[13px] ml-[28px] flex h-[21px] w-[82px] items-center justify-between rounded border border-[#8b8d9b] bg-[#9fa0af] px-1 font-['DejaVu_Sans'] text-[11px] text-[#5d606b]">
        Unnamed
        <svg viewBox="0 0 11 6" className="h-[6px] w-[11px]"><path d="M.5.500h10l-5 5z" fill="none" stroke="#b9bac6" /></svg>
      </button>
    </div>
  );
}

function NavBar() {
  return (
    <div className="absolute top-[256px] right-[3px] flex h-[259px] w-10 flex-col items-center rounded bg-[#596066] text-[#3f454d]">
      <svg viewBox="0 0 40 259" className="h-[259px] w-10" fill="none" stroke="currentColor" strokeWidth="1.500">
        <g strokeWidth="1"><circle cx="33" cy="7" r="4.500" fill="#4b5157" /><path d="m31 5 4 4M35 5l-4 4" /><circle cx="33" cy="252" r="4.500" fill="#4b5157" /><path d="M31 252h4" /></g>
        <path d="M20 22h13v13a13 13 0 1 1-13-13z" /><circle cx="20" cy="35" r="7" /><path d="m10 43 5-4M30 43l-5-4" />
        <path d="M17 60h6l-3 3zM17 147h6l-3 3zM17 194h6l-3 3z" fill="currentColor" />
        <path d="M3 69h34M3 203h34" stroke="#6a7076" strokeWidth="1" />
        <path d="M14 100 7 92c-3-3 1-6 3-3l4 4-3-14c0-3 3-3 4 0l3 10V76c0-3 4-3 4 0v13l3-11c1-3 4-2 4 1l-2 13 2-5c1-3 4-2 3 1l-3 9-6 7h-8z" />
        <path d="m7 110 18 18M25 110 7 128" /><path d="M5 108h6l-6 6zM27 108v6l-6-6zM5 130v-6l6 6z" fill="currentColor" /><circle cx="25" cy="127" r="6" /><path d="m29 131 5 5" strokeWidth="3" />
        <path d="M17 182v-20h-3l6-7 6 7h-3v20z" /><path d="M10 177c-9-4-5-10 10-10 17 0 17 9 4 9" /><path d="m8 176 6-4v7z" fill="currentColor" />
        <path d="M5.500 208h7v7h-7zM15.500 208h7v7h-7zM25.500 208h7v7h-7zM5.500 219h20v16h-20z" /><path d="m11 222 9 5-9 5z" fill="currentColor" />
      </svg>
    </div>
  );
}

function CommandLine() {
  return (
    <div className="absolute bottom-0 left-[387px] flex h-8 w-[1131px] items-center bg-[#2a303c]">
      <svg viewBox="0 0 6 22" className="ml-1 h-[22px] w-[6px]"><path d="M1 0v22M5 0v22" stroke="#b5b5b5" strokeWidth="2" strokeDasharray="2 2" /></svg>
      <IconButton label="Close command line" className="ml-2"><Ico className="h-3 w-3" box={12}><path d="m1 1 10 10M11 1 1 11" stroke="#b5b5b5" strokeWidth="2.500" /></Ico></IconButton>
      <IconButton label="Customize" className="ml-4"><Ico><path d="m2 18 9-9" stroke="#b5b5b5" strokeWidth="3.500" strokeLinecap="round" /><path d="M18.500 4.500 15 7l-2.500-2L15 1c-4-1-7 3-5 7 3 4 9 1 8.500-3.500z" fill="#b5b5b5" /></Ico></IconButton>
      <div className="ml-[6px] flex h-8 flex-1 items-center rounded-sm bg-[#bdbec0] px-1">
        <IconButton label="Recent commands" className="gap-[2px]">
          <svg viewBox="0 0 20 16" className="h-4 w-5"><path d="M.5.500h19v15H.500z" fill="#a9aaac" stroke="#666" /><path d="M0 0h20v4H0z" fill="#666" /><path d="m2 6 3 2.500L2 11M6 11.500h5" stroke="#555" fill="none" /></svg>
          <Tri className="h-[6px] w-[10px] text-[#555]" />
        </IconButton>
        <input aria-label="Command" placeholder="Type a command" className="ml-2 flex-1 bg-transparent font-['Liberation_Mono'] text-[15px] italic outline-none placeholder:text-[#68696c]" />
        <Tri className="mr-[2px] h-[6px] w-[9px] rotate-180 text-[#555]" />
      </div>
    </div>
  );
}

function Canvas() {
  return (
    <main className="relative mx-[5px] min-h-0 flex-1 overflow-hidden border-y-[5px] border-[#3b4453] bg-[#212830]">
      <svg className="absolute inset-0 h-full w-full" fill="none">
        <g transform="translate(-8 -232)">
          <GridLines />
          <g fill="#fff" fontFamily="Liberation Sans, Arial, sans-serif">
            {LABELS.map(([t, x, y, size, c], i) => (
              <text key={i} x={x} y={y} fontSize={size} fill={c ?? "#fff"}>{t}</text>
            ))}
            <text transform="translate(983 625) rotate(90)" fontSize="18">24'1"</text>
            <text transform="translate(1468 625) rotate(90)" fontSize="18">24'1"</text>
            <text x="513" y="879" fontSize="21">Y</text>
          </g>
          <FirstFloor />
          <SecondFloor />
          <path d="M1138 420.500h46M1188 420.500h47M1186.500 372v45M1186.500 424v45M1184.500 417.500h4v6h-4z" stroke="#fff" />
          <path d="M511.500 883v62" stroke="#fff" />
        </g>
      </svg>
      <button type="button" className="absolute top-[5px] left-[2px] text-sm text-[#e6e6e6]">[−][Top][2D Wireframe]</button>
      <div className="absolute top-[10px] right-[12px] flex items-center gap-[10px]">
        <IconButton label="Minimize drawing"><Ico className="h-[14px] w-[14px]" box={14}><path d="M0 10.500h14" stroke="#e6e6e6" strokeWidth="3" /></Ico></IconButton>
        <IconButton label="Restore drawing"><Ico className="h-[14px] w-[14px]" box={14}><path d="M4 1h9v9M2 5h7v7H2z" stroke="#e6e6e6" strokeWidth="2.200" /></Ico></IconButton>
        <IconButton label="Close drawing"><Ico className="h-[14px] w-[14px]" box={14}><path d="m2 2 10 10M12 2 2 12" stroke="#e6e6e6" strokeWidth="3" /></Ico></IconButton>
      </div>
      <ViewCube />
      <NavBar />
      <CommandLine />
      <svg viewBox="0 0 90 22" className="absolute bottom-[26px] left-[503px] h-[22px] w-[90px]" fontFamily="Liberation Sans, Arial, sans-serif">
        <path d="M0 19.500h64" stroke="#fff" />
        <text x="67" y="18" fontSize="21" fill="#fff">X</text>
      </svg>
    </main>
  );
}

/* ---------- taskbar ---------- */

function TaskApp({ label, children, dot }: Kids & { label: string; dot?: boolean }) {
  return (
    <button type="button" aria-label={label} className="relative flex h-[60px] w-[55px] items-center justify-center">
      {children}
      {dot && <span className="absolute bottom-1 h-1 w-2 rounded-full bg-[#7b7d7a]" />}
    </button>
  );
}

const APP = "h-[30px] w-[30px]";

function Taskbar() {
  return (
    <footer className="flex h-[60px] shrink-0 items-center bg-[linear-gradient(90deg,#d6dcc9_0%,#d8ded7_8%,#d9dfce_26%,#d8ddd8_40%,#d9ded3_60%,#dbe0cb_70%,#dce2bf_75%,#e6ddcf_81%,#eadbd5_90%,#ead8cf_100%)] text-sm text-[#1b1b1b]">
      <button type="button" className="ml-[25px] flex w-[220px] items-center gap-[9px] text-left leading-5">
        <Ico className={APP} box={30}>
          <path d="M17 2c13 5 14 18 5 24-7 4-17 1-20-8 9 2 20-3 15-16z" fill="#f39a1f" />
          <path d="M18 3c11 5 12 13 8 18-4-4-8-1-9-5 3-4 3-8 1-13z" fill="#f5b731" />
          <path d="M3 11a3 3 0 0 1 0-5 5 5 0 0 1 9-1c4 0 5 5 3 6z" fill="#a9bdf0" />
          <path d="M15 26a3 3 0 0 1 0-6 5 5 0 0 1 9-1c5 0 6 6 3 7z" fill="#c5d5fa" />
        </Ico>
        <span><span className="block">24°C</span><span className="block text-[#5d605c]">Partly cloudy</span></span>
      </button>
      <IconButton label="Start" className="ml-[311px]">
        <Ico className={APP} box={30}>
          <defs><linearGradient id="win" x1="0" y1="0" x2="1" y2="1"><stop stopColor="#4dcbfb" /><stop offset="1" stopColor="#0067c9" /></linearGradient></defs>
          <path d="M1 0h13v14H0V1zM15.500 0H29l1 1v13H15.500zM0 15.500h14V30H1l-1-1zM15.500 15.500H30V29l-1 1H15.500z" fill="url(#win)" />
        </Ico>
      </IconButton>
      <label className="ml-[17px] flex h-10 w-[274px] items-center rounded-full border border-[#c9ccc6] bg-[#f3f4f1] pr-[6px] pl-[13px]">
        <Ico><circle cx="8.500" cy="8" r="6.500" stroke="#222" strokeWidth="2" /><path d="m13 13 5.500 6" stroke="#222" strokeWidth="2.200" /></Ico>
        <input type="search" aria-label="Search" placeholder="Search" className="ml-3 w-0 flex-1 bg-transparent text-base outline-none placeholder:text-[#5f5f5f]" />
        <Ico className="h-[27px] w-[27px]" box={27}>
          <defs><linearGradient id="bing" x1="0" y1="0" x2="1" y2="1"><stop stopColor="#2fc4ee" /><stop offset="1" stopColor="#1b4fc9" /></linearGradient></defs>
          <path d="M2 14a12 12 0 1 1 12 12H2z" stroke="url(#bing)" strokeWidth="2" />
          <path d="M9 6l3 1v9l4-2-2-1-1-3 6 2c2 4 0 6-2 7l-5 2.500L9 19z" fill="url(#bing)" />
        </Ico>
      </label>
      <div className="ml-[3px] flex">
        <TaskApp label="Task view"><Ico className={APP} box={30}><path d="M0 8h23v20H0z" fill="#2b2b2a" /><path d="M8 0h21v20H8z" fill="#eeeeee" fillOpacity=".9" /><path d="M8 8h15v12H8z" fill="#bdbdbd" /></Ico></TaskApp>
        <TaskApp label="Chat">
          <Ico className={APP} box={30}>
            <defs><linearGradient id="chat" x1="0" y1="0" x2="1" y2="1"><stop stopColor="#86619f" /><stop offset=".5" stopColor="#5f61cf" /><stop offset="1" stopColor="#4b51c5" /></linearGradient></defs>
            <path d="M1 29V15A14.500 14.500 0 1 1 15 29z" fill="url(#chat)" /><rect x="7" y="9" width="12" height="12" rx="2" fill="#fff" /><path d="m20 13 4-3v10l-4-3z" fill="#fff" />
          </Ico>
        </TaskApp>
        <TaskApp label="Dell"><Ico className={APP} box={30}><circle cx="15" cy="15" r="14" stroke="#111" strokeWidth="2" /><text x="15" y="18.500" textAnchor="middle" fontFamily="Open Sans, sans-serif" fontWeight="800" fontSize="10" fill="#111">DELL</text></Ico></TaskApp>
        <TaskApp label="File Explorer" dot><Ico className={APP} box={30}><path d="M0 2h10l3 3v5H0z" fill="#d99a0b" /><path d="M0 9h10l3-4h17v23H0z" fill="#fbcb3c" /><path d="M5 28v-5c0-1 1-2 2-2h16c1 0 2 1 2 2v5z" fill="#1479cf" /><path d="M9 24.500h12" stroke="#0b4f8e" /></Ico></TaskApp>
        <TaskApp label="Microsoft Store" dot><Ico className={APP} box={30}><path d="M8 6V1h14v5" stroke="#2db1ec" strokeWidth="2" /><path d="M0 5h29v21a3 3 0 0 1-3 3H3a3 3 0 0 1-3-3z" fill="#1b4f8f" /><path d="M9 12h5v5H9z" fill="#f25022" /><path d="M15 12h5v5h-5z" fill="#7fba00" /><path d="M9 18h5v5H9z" fill="#00a4ef" /><path d="M15 18h5v5h-5z" fill="#ffb900" /></Ico></TaskApp>
        <TaskApp label="Microsoft Edge">
          <Ico className={APP} box={30}>
            <defs><linearGradient id="edge" x1="0" x2="1"><stop stopColor="#1b7fd3" /><stop offset=".5" stopColor="#2bb4d8" /><stop offset="1" stopColor="#5fd95b" /></linearGradient></defs>
            <path d="M0 15C0 6 7 0 15 0c9 0 15 6 15 13 0 6-7 7-11 5 2-3 0-8-5-8C8 9 2 12 0 15z" fill="url(#edge)" />
            <path d="M11 17c0 6 7 9 16 6-4 6-13 9-20 5-4-3-7-8-7-13 4-5 10-7 15-5-3 1-4 4-4 7z" fill="#1467b3" />
            <circle cx="7.500" cy="22.500" r="7.500" fill="#eef0ee" /><circle cx="7.500" cy="20" r="2.700" fill="#777" /><path d="M3.500 27c0-5 8-5 8 0z" fill="#777" />
          </Ico>
        </TaskApp>
        <TaskApp label="Spotify" dot><Ico className={APP} box={30}><circle cx="15" cy="15" r="14.500" fill="#1ed760" /><path d="M6 10.500c7-2 13-1 18.500 2M7 15.500c6-1.500 11-1 15.500 1.500M8 20c5-1 9-.5 13 1.500" stroke="#111" strokeWidth="2.500" strokeLinecap="round" /></Ico></TaskApp>
        <TaskApp label="WhatsApp" dot>
          <Ico className={APP} box={30}><path d="m0 30 2-8A14 14 0 1 1 8 28z" fill="#fff" /><path d="m3 27 1.500-5.500A12 12 0 1 1 9 26z" fill="#3fc351" /><path d="M10 8c3-2 4 4 2.500 5 1 3 3 4 5 5 1.500-2 6 0 4 2.500-5 5-17-7-11.500-12.500z" fill="#fff" /></Ico>
          <span className="absolute top-2 right-[2px] flex h-[21px] w-[26px] items-center justify-center rounded-full bg-[#0078d4] text-sm text-white">47</span>
        </TaskApp>
      </div>
      <button type="button" aria-label="AutoCAD" className="relative ml-[3px] flex h-[50px] w-[50px] items-center justify-center rounded-md bg-[#fbe4e6]">
        <Ico className={APP} box={30}><path d="M2 2 5 0v22H2z" fill="#f0587f" /><path d="M5 0h22v21H5z" fill="#e3114f" /><path d="M5 21h24v9H5l-3-3v-5zM27 1l2 2v18h-2z" fill="#7d0d2b" /><text x="16" y="16" textAnchor="middle" fontFamily="Open Sans, sans-serif" fontWeight="700" fontSize="15" fill="#fff">A</text><text x="16" y="28" textAnchor="middle" fontFamily="Open Sans, sans-serif" fontWeight="700" fontSize="7" fill="#fff">CAD</text></Ico>
        <span className="absolute bottom-[1px] h-1 w-5 rounded-full bg-[#c42b1c]" />
      </button>
      <div className="mr-[27px] ml-auto flex items-center">
        <IconButton label="Hidden icons"><Ico className="h-4 w-4" box={16}><path d="m2 11 6-6 6 6" stroke="#1b1b1b" strokeWidth="1.800" /></Ico></IconButton>
        <IconButton label="OneDrive" className="ml-[21px]"><Ico className="h-[22px] w-[22px]" box={20}><path d="M4 15a4 4 0 0 1-1-7 6 6 0 0 1 10-4c4 0 6 3 5 8l-6 3z" fill="#8b8b8b" stroke="#333" strokeWidth="1.300" /><circle cx="14" cy="14" r="5.500" fill="#d13438" /><path d="m12 12 4 4M16 12l-4 4" stroke="#fff" strokeWidth="1.300" /></Ico></IconButton>
        <button type="button" className="ml-[22px] text-center leading-5">ENG<br />IN</button>
        <IconButton label="Network and battery" className="ml-[23px] gap-[10px]">
          <Ico><path d="M1 8a13 13 0 0 1 18 0M4 11a9 9 0 0 1 12 0M7 14a5 5 0 0 1 6 0" stroke="#1b1b1b" strokeWidth="1.400" /><circle cx="10" cy="16.500" r="1.500" fill="#1b1b1b" /></Ico>
          <Ico><path d="M1 7.500h3l5-4v13l-5-4H1z" stroke="#1b1b1b" strokeWidth="1.200" /><path d="M12 7.500c1 1.500 1 3.500 0 5M14.500 5.500c2 3 2 6 0 9M17 3.500c3 4 3 9 0 13" stroke="#1b1b1b" strokeWidth="1.200" /></Ico>
          <Ico><rect x=".7" y="5" width="16" height="10.500" rx="2" stroke="#1b1b1b" strokeWidth="1.300" /><path d="M3 7h4v6.500H3zM18 8h1.500v4.500H18z" fill="#1b1b1b" /></Ico>
        </IconButton>
        <button type="button" className="ml-[21px] text-right leading-5">02:30<br />06-09-2023</button>
      </div>
    </footer>
  );
}

export default function App() {
  return (
    <div className="flex h-screen min-h-[600px] w-full flex-col overflow-hidden bg-[#cfd1d1] font-['Open_Sans',sans-serif]">
      <div className="mx-[2px] flex min-h-0 flex-1 flex-col overflow-hidden rounded-[9px] border border-[#0f8fd0] bg-[#222933]">
        <TitleBar />
        <RibbonTabs />
        <Ribbon />
        <FileTabs />
        <Canvas />
        <StatusBar />
      </div>
      <Taskbar />
    </div>
  );
}
